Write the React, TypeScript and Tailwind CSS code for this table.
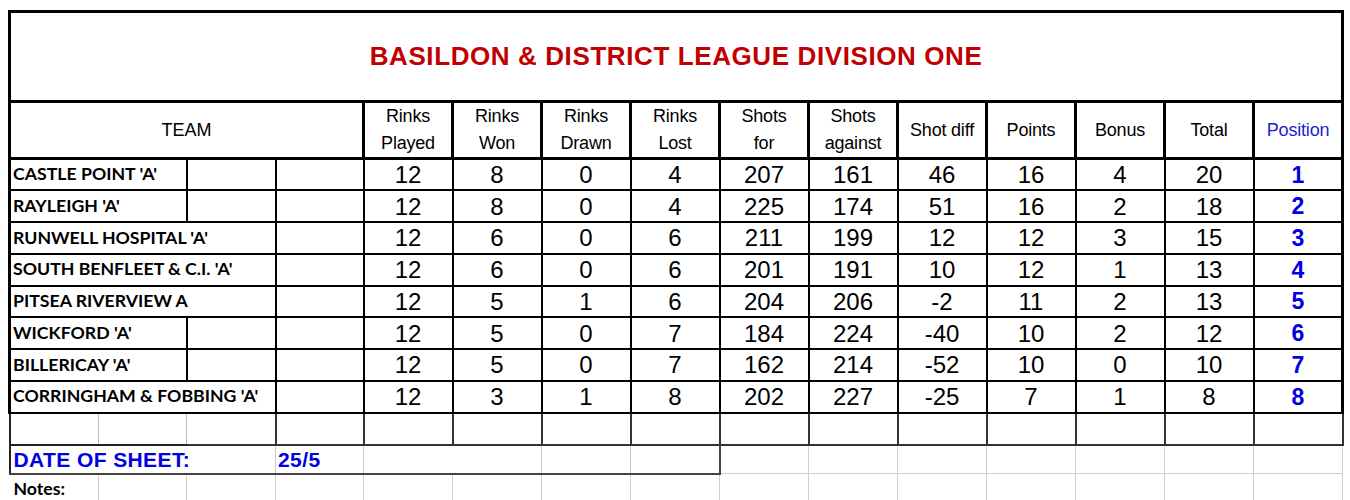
import React from 'react';

type Team = {
  name: string;
  split: boolean;
  stats: number[];
  pos: number;
};

const teams: Team[] = [
  { name: "CASTLE POINT 'A'", split: true, stats: [12, 8, 0, 4, 207, 161, 46, 16, 4, 20], pos: 1 },
  { name: "RAYLEIGH 'A'", split: true, stats: [12, 8, 0, 4, 225, 174, 51, 16, 2, 18], pos: 2 },
  { name: "RUNWELL HOSPITAL 'A'", split: false, stats: [12, 6, 0, 6, 211, 199, 12, 12, 3, 15], pos: 3 },
  { name: "SOUTH BENFLEET & C.I. 'A'", split: false, stats: [12, 6, 0, 6, 201, 191, 10, 12, 1, 13], pos: 4 },
  { name: 'PITSEA RIVERVIEW A', split: false, stats: [12, 5, 1, 6, 204, 206, -2, 11, 2, 13], pos: 5 },
  { name: "WICKFORD 'A'", split: true, stats: [12, 5, 0, 7, 184, 224, -40, 10, 2, 12], pos: 6 },
  { name: "BILLERICAY 'A'", split: true, stats: [12, 5, 0, 7, 162, 214, -52, 10, 0, 10], pos: 7 },
  { name: "CORRINGHAM & FOBBING 'A'", split: false, stats: [12, 3, 1, 8, 202, 227, -25, 7, 1, 8], pos: 8 },
];

const headers: string[][] = [
  ['Rinks', 'Played'],
  ['Rinks', 'Won'],
  ['Rinks', 'Drawn'],
  ['Rinks', 'Lost'],
  ['Shots', 'for'],
  ['Shots', 'against'],
  ['Shot diff'],
  ['Points'],
  ['Bonus'],
  ['Total'],
];

const arial = "font-['Liberation_Sans',Arial,sans-serif]";
const calibri = "font-['Lato','Open_Sans',sans-serif]";

const App = () => {
  return (
    <div className="w-[1350px] h-[500px] overflow-hidden bg-white pt-[10px] pl-[8px]">
      <table className={`table-fixed border-collapse w-[1335px] text-black ${arial}`}>
        <colgroup>
          <col className="w-[89px]" />
          <col className="w-[88px]" />
          <col className="w-[89px]" />
          <col className="w-[88px]" />
          {Array.from({ length: 11 }).map((_, i) => (
            <col key={i} className="w-[89px]" />
          ))}
        </colgroup>
        <tbody>
          {/* Title */}
          <tr className="h-[90px]">
            <td colSpan={15} className="border-[3px] border-black text-center align-middle">
              <span className="text-[26px] tracking-[0.6px] font-bold text-[#c00000]">
                BASILDON &amp; DISTRICT LEAGUE DIVISION ONE
              </span>
            </td>
          </tr>

          {/* Column headings */}
          <tr className="h-[55px]">
            <td colSpan={4} className="border-[3px] border-black text-center text-[18px] leading-[27px]">
              TEAM
            </td>
            {headers.map((h, i) => (
              <td key={i} className="border-[3px] border-black text-center text-[18px] leading-[27px] tracking-[-0.2px]">
                {h.map((line, j) => (
                  <div key={j}>{line}</div>
                ))}
              </td>
            ))}
            <td className="border-[3px] border-black text-center text-[18px] leading-[27px] tracking-[-0.2px] text-[#1c1cd0]">
              Position
            </td>
          </tr>

          {/* Teams */}
          {teams.map((t) => (
            <tr key={t.name} className="h-[31.75px]">
              {t.split ? (
                <>
                  <td colSpan={2} className={`border-2 border-l-[3px] border-black pl-[2px] text-[17.7px] font-bold whitespace-nowrap ${calibri}`}>
                    {t.name}
                  </td>
                  <td className="border-2 border-black" />
                </>
              ) : (
                <td colSpan={3} className={`border-2 border-l-[3px] border-black pl-[2px] text-[17.7px] font-bold whitespace-nowrap ${calibri}`}>
                  {t.name}
                </td>
              )}
              <td className="border-2 border-black" />
              {t.stats.map((s, i) => (
                <td key={i} className="border-2 border-black text-center text-[24px] leading-none pt-[1px]">
                  {s}
                </td>
              ))}
              <td className="border-2 border-r-[3px] border-black text-center text-[23px] leading-none pt-[1px] font-bold text-[#0000e0]">
                {t.pos}
              </td>
            </tr>
          ))}

          {/* Empty row */}
          <tr className="h-[32px]">
            <td className="border-l-2 border-b-2 border-r border-l-[#222] border-b-[#222] border-r-[#bdbdbd]" />
            <td className="border-b-2 border-r border-b-[#222] border-r-[#bdbdbd]" />
            <td className="border-b-2 border-r-2 border-[#333]" />
            {Array.from({ length: 12 }).map((_, i) => (
              <td key={i} className="border-b-2 border-r-2 border-[#333]" />
            ))}
          </tr>

          {/* Date row */}
          <tr className="h-[29px]">
            <td colSpan={3} className="border-l-2 border-b-2 border-r border-l-[#222] border-b-[#444] border-r-[#c8c8c8] pl-[3px] text-[21px] tracking-[0.4px] font-bold text-[#0000e0] whitespace-nowrap leading-none">
              DATE OF SHEET:
            </td>
            <td className="border-b-2 border-r border-b-[#444] border-r-[#c8c8c8] pl-[2px] text-[21px] tracking-[0.4px] font-bold text-[#0000e0] leading-none">
              25/5
            </td>
            <td colSpan={2} className="border-b-2 border-r border-b-[#444] border-r-[#c8c8c8]" />
            <td className="border-b-2 border-r border-b-[#444] border-r-[#c8c8c8]" />
            <td className="border-b-2 border-r-2 border-[#444]" />
            {Array.from({ length: 7 }).map((_, i) => (
              <td key={i} className="border-b border-r border-[#cfcfcf]" />
            ))}
          </tr>

          {/* Notes row */}
          <tr className="h-[30px]">
            <td className={`border-r border-[#cfcfcf] pl-[4px] text-[17.7px] font-bold whitespace-nowrap ${calibri}`}>
              Notes:
            </td>
            {Array.from({ length: 14 }).map((_, i) => (
              <td key={i} className="border-r border-[#cfcfcf]" />
            ))}
          </tr>
        </tbody>
      </table>
    </div>
  );
};

export default App;
